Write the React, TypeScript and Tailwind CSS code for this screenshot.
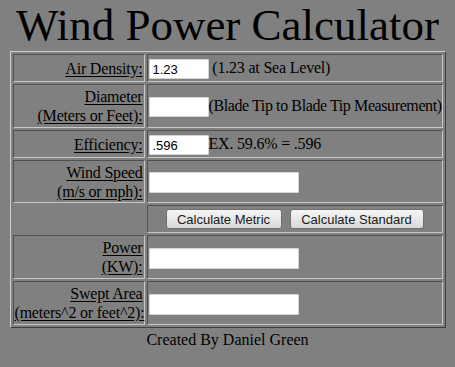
import React from "react";

const cell =
  "border border-t-[#505050] border-l-[#505050] border-b-[#c8c8c8] border-r-[#c8c8c8] p-px align-middle";

function Label({ lines }: { lines: string[] }) {
  return (
    <td className={`${cell} text-right leading-[19px] whitespace-nowrap`}>
      {lines.map((l, i) => (
        <React.Fragment key={i}>
          <span className="underline underline-offset-[2px]">{l}</span>
          {i < lines.length - 1 && <br />}
        </React.Fragment>
      ))}
    </td>
  );
}

function Box({ value = "", wide = false }: { value?: string; wide?: boolean }) {
  return (
    <input
      type="text"
      defaultValue={value}
      className={`${wide ? "w-[150px] h-[21px]" : "w-[60px] h-[20px]"} bg-white border border-[#d6d6d6] rounded-[1px] px-[3px] text-[13px] tracking-normal text-black font-['Liberation_Sans',Arial,sans-serif] align-middle outline-none`}
    />
  );
}

export default function App() {
  return (
    <div className="w-[455px] h-[367px] bg-[#808080] text-black font-['Liberation_Serif','Times_New_Roman',serif] text-[16px] overflow-hidden">
      <h1 className="text-center text-[45px] leading-[50px] h-[51px] font-normal">Wind Power Calculator</h1>

      <table className="mx-auto table-fixed w-[436px] border-separate border-spacing-[2px] border border-t-[#d0d0d0] border-l-[#d0d0d0] border-b-[#404040] border-r-[#404040] tracking-[-0.2px]">
        <colgroup>
          <col className="w-[132px]" />
          <col className="w-[296px]" />
        </colgroup>
        <tbody>
          <tr className="h-[26px]">
            <Label lines={["Air Density:"]} />
            <td className={`${cell} whitespace-nowrap`}>
              <Box value="1.23" /> (1.23 at Sea Level)
            </td>
          </tr>
          <tr className="h-[44px]">
            <Label lines={["Diameter", "(Meters or Feet):"]} />
            <td className={`${cell} whitespace-nowrap tracking-[-0.4px]`}>
              <Box />(Blade Tip to Blade Tip Measurement)
            </td>
          </tr>
          <tr className="h-[25px]">
            <Label lines={["Efficiency:"]} />
            <td className={`${cell} whitespace-nowrap`}>
              <Box value=".596" />EX. 59.6% = .596
            </td>
          </tr>
          <tr className="h-[43px]">
            <Label lines={["Wind Speed", "(m/s or mph):"]} />
            <td className={cell}>
              <Box wide />
            </td>
          </tr>
          <tr className="h-[28px]">
            <td></td>
            <td className={cell}>
              <div className="flex justify-center gap-[8px] font-['Liberation_Sans',Arial,sans-serif] text-[13px] tracking-normal">
                <button className="w-[116px] h-[20px] rounded-[3px] border border-[#707070] bg-gradient-to-b from-[#f6f6f6] to-[#d9d9d9] text-[#1a1a1a]">
                  Calculate Metric
                </button>
                <button className="w-[134px] h-[20px] rounded-[3px] border border-[#707070] bg-gradient-to-b from-[#f6f6f6] to-[#d9d9d9] text-[#1a1a1a]">
                  Calculate Standard
                </button>
              </div>
            </td>
          </tr>
          <tr className="h-[44px]">
            <Label lines={["Power", "(KW):"]} />
            <td className={cell}>
              <Box wide />
            </td>
          </tr>
          <tr className="h-[44px]">
            <Label lines={["Swept Area", "(meters^2 or feet^2):"]} />
            <td className={cell}>
              <Box wide />
            </td>
          </tr>
        </tbody>
      </table>

      <p className="text-center mt-[3px] leading-[18px]">Created By Daniel Green</p>
    </div>
  );
}
